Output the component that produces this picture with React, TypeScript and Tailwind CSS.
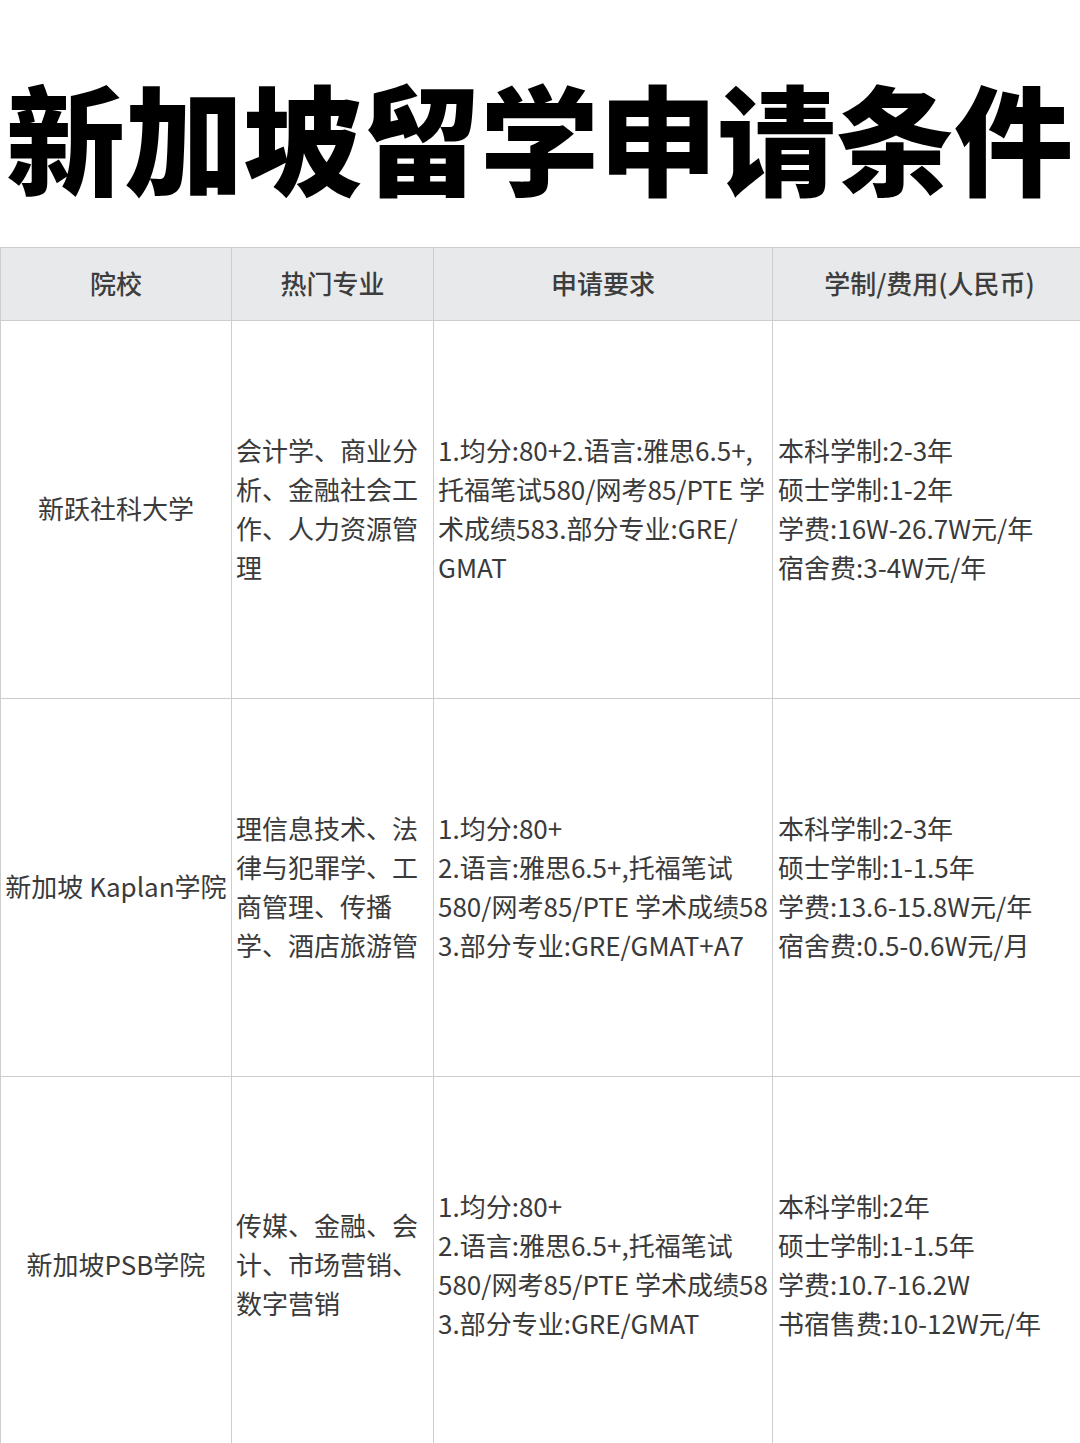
const rows = [
  {
    school: ['新跃社科大学'],
    majors: ['会计学、商业分', '析、金融社会工', '作、人力资源管', '理'],
    reqs: ['1.均分:80+2.语言:雅思6.5+,', '托福笔试580/网考85/PTE 学', '术成绩583.部分专业:GRE/', 'GMAT'],
    fees: ['本科学制:2-3年', '硕士学制:1-2年', '学费:16W-26.7W元/年', '宿舍费:3-4W元/年'],
  },
  {
    school: ['新加坡 Kaplan学院'],
    majors: ['理信息技术、法', '律与犯罪学、工', '商管理、传播', '学、酒店旅游管'],
    reqs: ['1.均分:80+', '2.语言:雅思6.5+,托福笔试', '580/网考85/PTE 学术成绩58', '3.部分专业:GRE/GMAT+A7'],
    fees: ['本科学制:2-3年', '硕士学制:1-1.5年', '学费:13.6-15.8W元/年', '宿舍费:0.5-0.6W元/月'],
  },
  {
    school: ['新加坡PSB学院'],
    majors: ['传媒、金融、会', '计、市场营销、', '数字营销'],
    reqs: ['1.均分:80+', '2.语言:雅思6.5+,托福笔试', '580/网考85/PTE 学术成绩58', '3.部分专业:GRE/GMAT'],
    fees: ['本科学制:2年', '硕士学制:1-1.5年', '学费:10.7-16.2W', '书宿售费:10-12W元/年'],
  },
]

function Lines({ lines }: { lines: string[] }) {
  return (
    <>
      {lines.map((l, i) => (
        <div key={i} className="whitespace-nowrap">
          {l}
        </div>
      ))}
    </>
  )
}

export default function App() {
  return (
    <div
      className="w-[1080px] h-[1443px] overflow-hidden bg-white"
      style={{ fontFamily: '"Noto Sans CJK SC", "Noto Sans", sans-serif' }}
    >
      {/* Title */}
      <div className="h-[247px] flex items-center pl-[6px]">
        <h1 className="text-[119px] leading-none font-black text-black tracking-[-0.5px] whitespace-nowrap mt-[24px]">
          新加坡留学申请条件
        </h1>
      </div>

      {/* Table */}
      <table className="w-[1086px] table-fixed border-collapse text-[26px] leading-[39px] text-[#3a3a3a]">
        <colgroup>
          <col className="w-[231px]" />
          <col className="w-[202px]" />
          <col className="w-[339px]" />
          <col className="w-[314px]" />
        </colgroup>
        <thead>
          <tr className="h-[73px] bg-[#e8e9eb] text-[#3d3d3d]">
            <th className="border border-[#cdcdcd] font-medium text-center pb-[3px]">院校</th>
            <th className="border border-[#cdcdcd] font-medium text-center pb-[3px]">热门专业</th>
            <th className="border border-[#cdcdcd] font-medium text-center pb-[3px]">申请要求</th>
            <th className="border border-[#cdcdcd] font-medium text-center pb-[3px]">学制/费用(人民币)</th>
          </tr>
        </thead>
        <tbody>
          {rows.map((r, i) => (
            <tr key={i} className="h-[378px]">
              <td className="border border-[#cdcdcd] text-center align-middle px-0 pb-[4px]">
                <div className="flex justify-center">
                  <Lines lines={r.school} />
                </div>
              </td>
              <td className="border border-[#cdcdcd] align-middle pl-[4px] pr-0 pb-[4px]">
                <Lines lines={r.majors} />
              </td>
              <td className="border border-[#cdcdcd] align-middle pl-[4px] pr-0 pb-[4px]">
                <Lines lines={r.reqs} />
              </td>
              <td className="border border-[#cdcdcd] align-middle pl-[5px] pr-0 pb-[4px]">
                <Lines lines={r.fees} />
              </td>
            </tr>
          ))}
        </tbody>
      </table>
    </div>
  )
}
